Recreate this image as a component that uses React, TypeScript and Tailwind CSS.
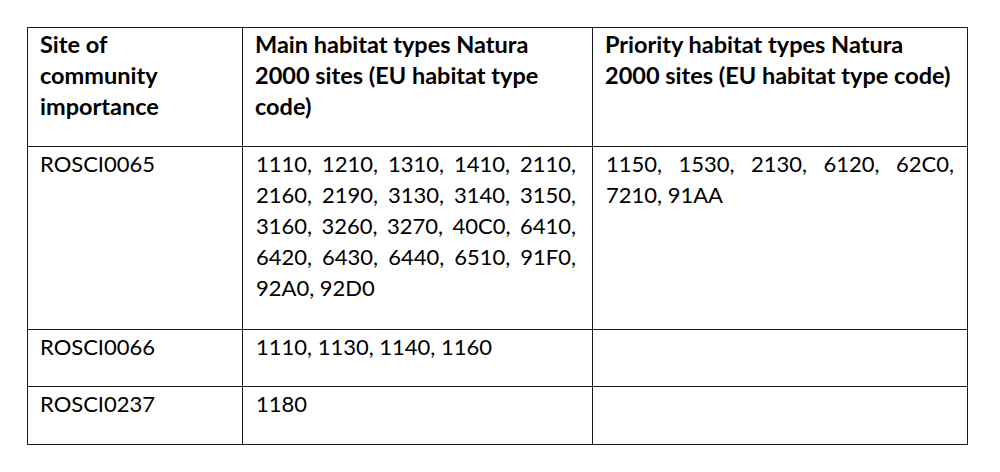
const rows = [
  {
    site: 'ROSCI0065',
    main: [
      '1110, 1210, 1310, 1410, 2110,',
      '2160, 2190, 3130, 3140, 3150,',
      '3160, 3260, 3270, 40C0, 6410,',
      '6420, 6430, 6440, 6510, 91F0,',
      '92A0, 92D0',
    ],
    priority: ['1150, 1530, 2130, 6120, 62C0,', '7210, 91AA'],
    height: 'h-[183px]',
  },
  {
    site: 'ROSCI0066',
    main: ['1110, 1130, 1140, 1160'],
    priority: [],
    height: 'h-[57px]',
  },
  {
    site: 'ROSCI0237',
    main: ['1180'],
    priority: [],
    height: 'h-[58px]',
  },
];

// Word-style justified cell: every line but the last is stretched to full width
function Justified({ lines }: { lines: string[] }) {
  return (
    <>
      {lines.map((line, i) => (
        <div
          key={i}
          className={
            i < lines.length - 1
              ? 'whitespace-nowrap text-justify [text-align-last:justify]'
              : 'whitespace-nowrap'
          }
        >
          {line}
        </div>
      ))}
    </>
  );
}

function HeadCell({ lines }: { lines: string[] }) {
  return (
    <th className="border border-[#1c1c1c] pl-[12px] pr-[13px] pt-px text-left align-top text-[23.5px] font-bold">
      {lines.map((line) => (
        <div key={line} className="whitespace-nowrap">
          {line}
        </div>
      ))}
    </th>
  );
}

export default function App() {
  return (
    <div
      className="min-h-[472px] w-[1000px] bg-white pl-[27px] pt-[27px] text-[22px] leading-[31px] text-black"
      style={{ fontFamily: 'Lato, "Open Sans", sans-serif' }}
    >
      <table className="w-[940px] table-fixed border-collapse">
        <colgroup>
          <col className="w-[215px]" />
          <col className="w-[350px]" />
          <col className="w-[375px]" />
        </colgroup>
        <thead>
          <tr className="h-[119px]">
            <HeadCell lines={['Site of', 'community', 'importance']} />
            <HeadCell
              lines={['Main habitat types Natura', '2000 sites (EU habitat type', 'code)']}
            />
            <HeadCell
              lines={['Priority habitat types Natura', '2000 sites (EU habitat type code)']}
            />
          </tr>
        </thead>
        <tbody>
          {rows.map((row) => (
            <tr key={row.site} className={row.height}>
              <td className="border border-[#1c1c1c] pl-[12px] pr-[13px] pt-px align-top">
                {row.site}
              </td>
              <td className="border border-[#1c1c1c] pl-[13px] pr-[16px] pt-px align-top">
                <Justified lines={row.main} />
              </td>
              <td className="border border-[#1c1c1c] pl-[13px] pr-[13px] pt-px align-top">
                <Justified lines={row.priority} />
              </td>
            </tr>
          ))}
        </tbody>
      </table>
    </div>
  );
}
